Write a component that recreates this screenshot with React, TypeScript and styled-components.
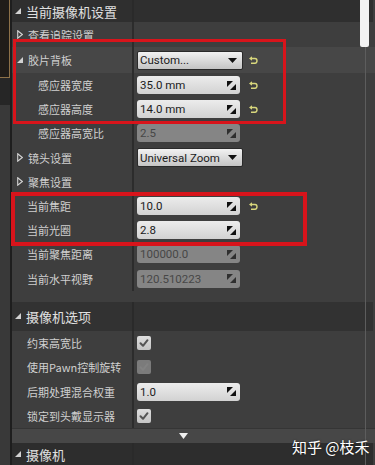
import React from 'react'
import styled, { createGlobalStyle } from 'styled-components'

const GlobalStyle = createGlobalStyle`
  html, body {
    margin: 0;
    padding: 0;
    background: #3e3e3e;
  }
  body {
    font-family: "Noto Sans CJK SC", "Noto Sans", sans-serif;
  }
`

type Control =
  | { kind: 'input'; value: string; disabled?: boolean }
  | { kind: 'combo'; value: string }
  | { kind: 'check'; checked: boolean }

type Prop = {
  label: string
  indent: number
  arrow?: 'open' | 'closed'
  h: number
  highlight?: boolean
  control?: Control
  reset?: boolean
}

const filmRows: Prop[] = [
  { label: '查看追踪设置', indent: 5, arrow: 'closed', h: 25 },
  { label: '胶片背板', indent: 5, arrow: 'open', h: 26, highlight: true, control: { kind: 'combo', value: 'Custom...' }, reset: true },
  { label: '感应器宽度', indent: 26, h: 24.2, control: { kind: 'input', value: '35.0 mm' }, reset: true },
  { label: '感应器高度', indent: 26, h: 24.2, control: { kind: 'input', value: '14.0 mm' }, reset: true },
  { label: '感应器高宽比', indent: 26, h: 24.2, control: { kind: 'input', value: '2.5', disabled: true } },
  { label: '镜头设置', indent: 5, arrow: 'closed', h: 24.2, control: { kind: 'combo', value: 'Universal Zoom' } },
  { label: '聚焦设置', indent: 5, arrow: 'closed', h: 24.2 },
  { label: '当前焦距', indent: 15, h: 24.2, control: { kind: 'input', value: '10.0' }, reset: true },
  { label: '当前光圈', indent: 15, h: 24.2, control: { kind: 'input', value: '2.8' } },
  { label: '当前聚焦距离', indent: 15, h: 24.2, control: { kind: 'input', value: '100000.0', disabled: true } },
  { label: '当前水平视野', indent: 15, h: 24.2, control: { kind: 'input', value: '120.510223', disabled: true } },
]

const optionRows: Prop[] = [
  { label: '约束高宽比', indent: 15, h: 24.4, control: { kind: 'check', checked: true } },
  { label: '使用Pawn控制旋转', indent: 15, h: 24.4, control: { kind: 'check', checked: false } },
  { label: '后期处理混合权重', indent: 15, h: 24.4, control: { kind: 'input', value: '1.0' } },
  { label: '锁定到头戴显示器', indent: 15, h: 24.4, control: { kind: 'check', checked: true } },
]

function OpenArrow() {
  return (
    <svg width="6" height="6" viewBox="0 0 6 6">
      <path d="M6 0 L6 6 L0 6 Z" fill="#d2d2d2" />
    </svg>
  )
}

function ClosedArrow() {
  return (
    <svg width="6" height="9" viewBox="0 0 6 9">
      <path d="M0.7 0.8 L5.3 4.5 L0.7 8.2 Z" fill="none" stroke="#d2d2d2" strokeWidth="1.1" />
    </svg>
  )
}

function SpinIcon({ dim }: { dim?: boolean }) {
  const c = dim ? '#2f2f2f' : '#101010'
  return (
    <svg width="9" height="9" viewBox="0 0 9 9">
      <path d="M0 0 L6 0 L0 6 Z" fill={c} />
      <path d="M9 9 L3 9 L9 3 Z" fill={c} />
    </svg>
  )
}

function ComboArrow() {
  return (
    <svg width="9" height="5" viewBox="0 0 9 5">
      <path d="M0 0 L9 0 L4.5 5 Z" fill="#111" />
    </svg>
  )
}

function ResetIcon() {
  return (
    <svg width="9" height="9" viewBox="0 0 9 9">
      <path d="M2.5 2.5 H6 Q8 2.5 8 4.8 Q8 7.2 6 7.2 H2" fill="none" stroke="#d8d77c" strokeWidth="1.4" />
      <path d="M0 2.5 L3 0.2 L3 4.8 Z" fill="#d8d77c" />
    </svg>
  )
}

function CheckMark({ dim }: { dim?: boolean }) {
  return (
    <svg width="14" height="14" viewBox="0 0 14 14">
      <path
        d="M3.5 7.3 L6 9.8 L10.5 4.2"
        fill="none"
        stroke={dim ? '#828282' : '#555'}
        strokeWidth="2"
        strokeLinecap="round"
        strokeLinejoin="round"
      />
    </svg>
  )
}

function ControlView({ control }: { control: Control }) {
  if (control.kind === 'combo') {
    return (
      <Combo>
        <FieldText>{control.value}</FieldText>
        <ComboArrow />
      </Combo>
    )
  }
  if (control.kind === 'check') {
    return <CheckBox $checked={control.checked}>{control.checked ? <CheckMark /> : <CheckMark dim />}</CheckBox>
  }
  return (
    <Field $disabled={control.disabled}>
      <FieldText $disabled={control.disabled}>{control.value}</FieldText>
      <SpinIcon dim={control.disabled} />
    </Field>
  )
}

function PropRow({ row }: { row: Prop }) {
  return (
    <Row $h={row.h} $highlight={row.highlight}>
      <NameCell $indent={row.indent}>
        {row.arrow === 'open' && <OpenArrow />}
        {row.arrow === 'closed' && <ClosedArrow />}
        <Label>{row.label}</Label>
      </NameCell>
      <ValueCell>
        <ControlSlot>{row.control && <ControlView control={row.control} />}</ControlSlot>
        {row.reset && <ResetIcon />}
      </ValueCell>
    </Row>
  )
}

export default function App() {
  return (
    <>
      <GlobalStyle />
      <Frame>
        <LeftStrip>
          <DockTab />
          <DockGap />
          <DockRest />
        </LeftStrip>
        <Panel>
          <Header $h={22}>
            <HeaderName>
              <OpenArrow />
              <HeaderText>当前摄像机设置</HeaderText>
            </HeaderName>
          </Header>
          {filmRows.map((r) => (
            <PropRow key={r.label} row={r} />
          ))}
          <Spacer $h={11} />
          <Header $h={29} $bg="#323232">
            <HeaderName>
              <OpenArrow />
              <HeaderText>摄像机选项</HeaderText>
            </HeaderName>
          </Header>
          {optionRows.map((r) => (
            <PropRow key={r.label} row={r} />
          ))}
          <ExpandBar>
            <svg width="9" height="6" viewBox="0 0 9 6">
              <path d="M0 0 L9 0 L4.5 6 Z" fill="#f0f0f0" />
            </svg>
          </ExpandBar>
          <Header $h={22} $bg="#2d2d2d">
            <HeaderName>
              <OpenArrow />
              <HeaderText>摄像机</HeaderText>
            </HeaderName>
          </Header>
        </Panel>

        <ScrollThumb />
        <ScrollLine />
        <Highlight style={{ left: 13, top: 39, width: 273, height: 85 }} $w={3} />
        <Highlight style={{ left: 11, top: 192, width: 296, height: 54 }} $w={4} />
        <Watermark>知乎 @枝禾</Watermark>
      </Frame>
    </>
  )
}

const Frame = styled.div`
  position: relative;
  width: 375px;
  height: 465px;
  overflow: hidden;
  display: flex;
  background: #3e3e3e;
`

const LeftStrip = styled.div`
  width: 10px;
  flex: none;
  display: flex;
  flex-direction: column;
  border-right: 2px solid #1e1e1e;
`

const DockTab = styled.div`
  height: 77px;
  background: #1f1c19;
  border-right: 1px solid #8d7149;
  border-bottom: 1px solid #8d7149;
`

const DockGap = styled.div`
  height: 27px;
  background: #262626;
`

const DockRest = styled.div`
  flex: 1;
  background: #393939;
`

const Panel = styled.div`
  flex: 1;
  display: flex;
  flex-direction: column;
  min-width: 0;
`

const Header = styled.div<{ $h: number; $bg?: string }>`
  flex: none;
  height: ${(p) => p.$h}px;
  display: flex;
  background: ${(p) => p.$bg || '#2f2f2f'};
  margin-right: 2px;
`

const HeaderName = styled.div`
  width: 122px;
  box-sizing: border-box;
  border-right: 2px solid #2a2a2a;
  display: flex;
  align-items: center;
  gap: 5px;
  padding-left: 3px;
`

const HeaderText = styled.span`
  font-size: 13px;
  color: #e0e0e0;
  white-space: nowrap;
`

const Row = styled.div<{ $h: number; $highlight?: boolean }>`
  flex: none;
  height: ${(p) => p.$h}px;
  display: flex;
  background: ${(p) => (p.$highlight ? '#474747' : '#3e3e3e')};
`

const NameCell = styled.div<{ $indent: number }>`
  width: 122px;
  flex: none;
  box-sizing: border-box;
  border-right: 2px solid #2c2c2c;
  display: flex;
  align-items: center;
  gap: 5px;
  padding-left: ${(p) => p.$indent}px;
`

const Label = styled.span`
  font-size: 11px;
  color: #d0d0d0;
  white-space: nowrap;
`

const ValueCell = styled.div`
  flex: 1;
  display: flex;
  align-items: center;
  padding-left: 3px;
`

const ControlSlot = styled.div`
  width: 112px;
  flex: none;
  display: flex;
  align-items: center;
`

const Field = styled.div<{ $disabled?: boolean }>`
  width: 103px;
  height: 18px;
  box-sizing: border-box;
  border-radius: 3px;
  display: flex;
  align-items: center;
  justify-content: space-between;
  padding: 0 4px 0 3px;
  background: ${(p) => (p.$disabled ? '#858585' : 'linear-gradient(#ececec, #d2d2d2)')};
`

const FieldText = styled.span<{ $disabled?: boolean }>`
  font-family: Roboto, "Liberation Sans", sans-serif;
  font-size: 11.5px;
  color: ${(p) => (p.$disabled ? '#474747' : '#1b1b1b')};
  white-space: nowrap;
`

const Combo = styled.div`
  width: 106px;
  height: 19px;
  box-sizing: border-box;
  border-radius: 2px;
  border: 1px solid #2a2a2a;
  display: flex;
  align-items: center;
  justify-content: space-between;
  padding: 0 5px 0 2px;
  background: linear-gradient(#f2f2f2, #c4c4c4);
`

const CheckBox = styled.div<{ $checked: boolean }>`
  width: 14px;
  height: 14px;
  border-radius: 2px;
  background: ${(p) => (p.$checked ? 'linear-gradient(#dedede, #c4c4c4)' : '#7b7b7b')};
  display: flex;
`

const Spacer = styled.div<{ $h: number }>`
  flex: none;
  height: ${(p) => p.$h}px;
`

const ExpandBar = styled.div`
  flex: none;
  height: 15px;
  box-sizing: border-box;
  background: #474747;
  border-top: 1px solid #353535;
  display: flex;
  align-items: center;
  padding-left: 167px;
`

const ScrollThumb = styled.div`
  position: absolute;
  left: 360px;
  top: 0;
  width: 9px;
  height: 47px;
  background: #f3f3f3;
  border-radius: 0 0 2px 2px;
`

const ScrollLine = styled.div`
  position: absolute;
  left: 365px;
  top: 47px;
  bottom: 0;
  width: 1px;
  background: #5d5d5d;
`

const Highlight = styled.div<{ $w: number }>`
  position: absolute;
  box-sizing: border-box;
  border: ${(p) => p.$w}px solid #d8141b;
  pointer-events: none;
`

const Watermark = styled.div`
  position: absolute;
  left: 292px;
  top: 436px;
  font-family: "Noto Sans CJK SC", sans-serif;
  font-size: 15px;
  color: #ffffff;
  text-shadow: 0 0 2px rgba(0, 0, 0, 0.6);
  white-space: nowrap;
`
